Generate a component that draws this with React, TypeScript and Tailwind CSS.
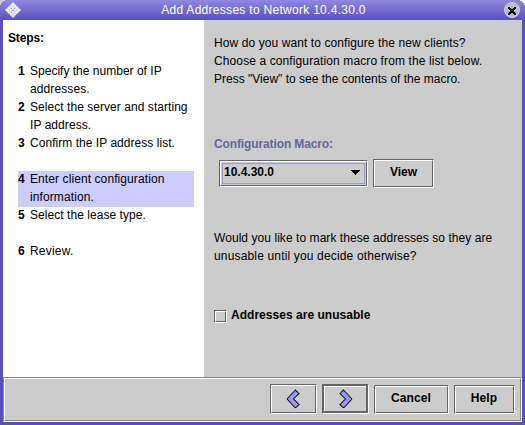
import React from "react";

const etched = "border border-t-[#666] border-l-[#666] border-r-white border-b-white";
const etchedInner = "border border-t-white border-l-white border-r-[#666] border-b-[#666]";

function MetalButton({ className, thick, children }: { className: string; thick?: boolean; children: React.ReactNode }) {
  return (
    <button className={`flex shrink-0 ${etched} ${className}`}>
      <span
        className={`flex h-full w-full items-center justify-center ${
          thick ? "border-t border-l border-r-2 border-b-2 border-[#666]" : etchedInner
        }`}
      >
        {thick ? (
          <span className="flex h-full w-full items-center justify-center border-t border-l border-white">{children}</span>
        ) : (
          children
        )}
      </span>
    </button>
  );
}

function Chevron({ flip }: { flip?: boolean }) {
  return (
    <svg width="14" height="20" viewBox="0 0 14 20" className={flip ? "-mr-px -scale-x-100" : "mr-px"}>
      <path d="M9.5 1L1 10L9.5 19L13 15.5L7.5 10L13 4.5Z" fill="#9999ff" />
      <path d="M9.5 1L1 10L9.5 19L13 15.5L7.5 10L13 4.5Z" fill="none" stroke="#000" strokeWidth="1.1" strokeDasharray="1.3 0.25" />
    </svg>
  );
}

interface Line {
  text: string;
  tracking: string;
}

const steps: { n: number; lines: Line[]; active?: boolean }[] = [
  { n: 1, lines: [{ text: "Specify the number of IP", tracking: "tracking-[0.01px]" }, { text: "addresses.", tracking: "tracking-[0.1px]" }] },
  { n: 2, lines: [{ text: "Select the server and starting", tracking: "tracking-[0.05px]" }, { text: "IP address.", tracking: "tracking-[0.06px]" }] },
  { n: 3, lines: [{ text: "Confirm the IP address list.", tracking: "tracking-[0.04px]" }] },
  { n: 4, active: true, lines: [{ text: "Enter client configuration", tracking: "tracking-[0.09px]" }, { text: "information.", tracking: "tracking-[0.1px]" }] },
  { n: 5, lines: [{ text: "Select the lease type.", tracking: "tracking-[0.05px]" }] },
  { n: 6, lines: [{ text: "Review.", tracking: "tracking-[0.2px]" }] },
];

function TextLine({ text, tracking }: Line) {
  return <div className={`h-[18px] whitespace-nowrap ${tracking}`}>{text}</div>;
}

export default function App() {
  return (
    <div className="flex h-[425px] w-[525px] flex-col overflow-hidden bg-[#5b4fbf] font-['Liberation_Sans',Arial,sans-serif] text-[12px] leading-[18px] text-black">
      <header className="relative flex h-5 shrink-0 items-center justify-center bg-linear-to-b from-[#9088e0] to-[#5b4fbb] text-white">
        <svg className="absolute top-0 left-0" width="22" height="20" viewBox="0 0 22 20">
          <path d="M0 0H5V1H3V2H2V3H1V5H0Z" fill="#cccccc" shapeRendering="crispEdges" />
          <path d="M13 2L21 10L13 18L5 10Z" fill="#eeecf8" />
          <path d="M9 6L17 14M11 4L19 12M7 8L15 16M17 6L9 14M19 8L11 16M15 4L7 12" stroke="#b5b0dc" strokeWidth="0.6" strokeDasharray="1.4 1" />
          <path d="M11 8H12V9H11ZM14 8H15V9H14ZM12 10H14V11H12ZM11 12H12V13H11Z" fill="#8f88cc" />
        </svg>
        <span className="pl-[2px] text-[12px] tracking-[0.29px] whitespace-nowrap">Add Addresses to Network 10.4.30.0</span>
        <svg className="absolute top-0 right-0" width="23" height="20" viewBox="0 0 23 20">
          <path d="M18 0H23V5H22V3H21V2H20V1H18Z" fill="#ffffff" shapeRendering="crispEdges" />
          <circle cx="10" cy="10" r="7.5" fill="#bcbcc8" stroke="#d5d4e4" />
          <path d="M6 7H8V8H9V9H11V8H12V7H14V9H13V10H12V12H13V13H14V15H12V14H11V13H9V14H8V15H6V13H7V12H8V10H7V9H6Z" fill="#000" shapeRendering="crispEdges" />
        </svg>
      </header>

      <div className="flex h-[357px] shrink-0 px-[3px]">
        <aside className="w-[201px] shrink-0 bg-white pt-[9px] pl-[5px]">
          <h1 className="h-[34px] text-[12px] font-bold tracking-[-0.13px]">Steps:</h1>
          <ol className="ml-[10px] w-[176px]">
            {steps.map((step) => (
              <li key={step.n} className={`flex h-9 ${step.active ? "bg-[#ccccff]" : ""}`}>
                <div className="-mt-px w-3 shrink-0 font-bold">{step.n}</div>
                <div className="-mt-px">
                  {step.lines.map((line) => (
                    <TextLine key={line.text} {...line} />
                  ))}
                </div>
              </li>
            ))}
          </ol>
        </aside>

        <main className="flex-1 bg-[#cccccc] pt-[14px] pl-[10px]">
          <TextLine text="How do you want to configure the new clients?" tracking="tracking-[0.09px]" />
          <TextLine text="Choose a configuration macro from the list below." tracking="tracking-[0.11px]" />
          <TextLine text={'Press "View" to see the contents of the macro.'} tracking="tracking-[0px]" />
          <div className="mt-[47px] h-[24px] font-bold tracking-[-0.12px] text-[#666699]">Configuration Macro:</div>
          <div className="flex h-[29px] gap-[5px] pl-[5px]">
            <div className={`mt-px h-[27px] w-[149px] shrink-0 ${etched}`}>
              <div className={`h-full w-full p-px ${etchedInner}`}>
                <div className="flex h-full items-center justify-between border border-[#9999cc] pr-1 pb-[3px] pl-px font-bold">
                  <span className="tracking-[0px]">10.4.30.0</span>
                  <svg width="10" height="5" viewBox="0 0 10 5" shapeRendering="crispEdges">
                    <path d="M0 0H10L5 5Z" />
                  </svg>
                </div>
              </div>
            </div>
            <MetalButton className="h-[29px] w-[61px]">
              <span className="-mt-1 font-bold">View</span>
            </MetalButton>
          </div>
          <div className="mt-[41px]">
            <TextLine text="Would you like to mark these addresses so they are" tracking="tracking-[0.06px]" />
            <TextLine text="unusable until you decide otherwise?" tracking="tracking-[0.16px]" />
          </div>
          <label className="mt-[41px] flex font-bold">
            <span className={`mt-[4px] mr-1 h-[13px] w-[13px] ${etched}`}>
              <span className={`block h-full w-full ${etchedInner}`} />
            </span>
            <span className="tracking-[0.03px]">Addresses are unusable</span>
          </label>
        </main>
      </div>

      <footer className="mx-[3px] h-[45px] shrink-0 border border-t-[#888] border-r-white border-b-white border-l-[#888] bg-[#cccccc]">
        <div className="flex h-full justify-end gap-[5px] border border-t-white border-r-[#888] border-b-[#888] border-l-white pt-[5px] pr-[5px]">
          <MetalButton className="h-[30px] w-[47px]"><Chevron /></MetalButton>
          <MetalButton thick className="h-[30px] w-[47px]"><Chevron flip /></MetalButton>
          <MetalButton className="mt-px h-[29px] w-[75px]">
            <span className="-mt-1 mr-px font-bold tracking-[0.1px]">Cancel</span>
          </MetalButton>
          <MetalButton className="mt-px h-[29px] w-[61px]">
            <span className="-mt-1 mr-px font-bold tracking-[0.1px]">Help</span>
          </MetalButton>
        </div>
      </footer>
    </div>
  );
}
